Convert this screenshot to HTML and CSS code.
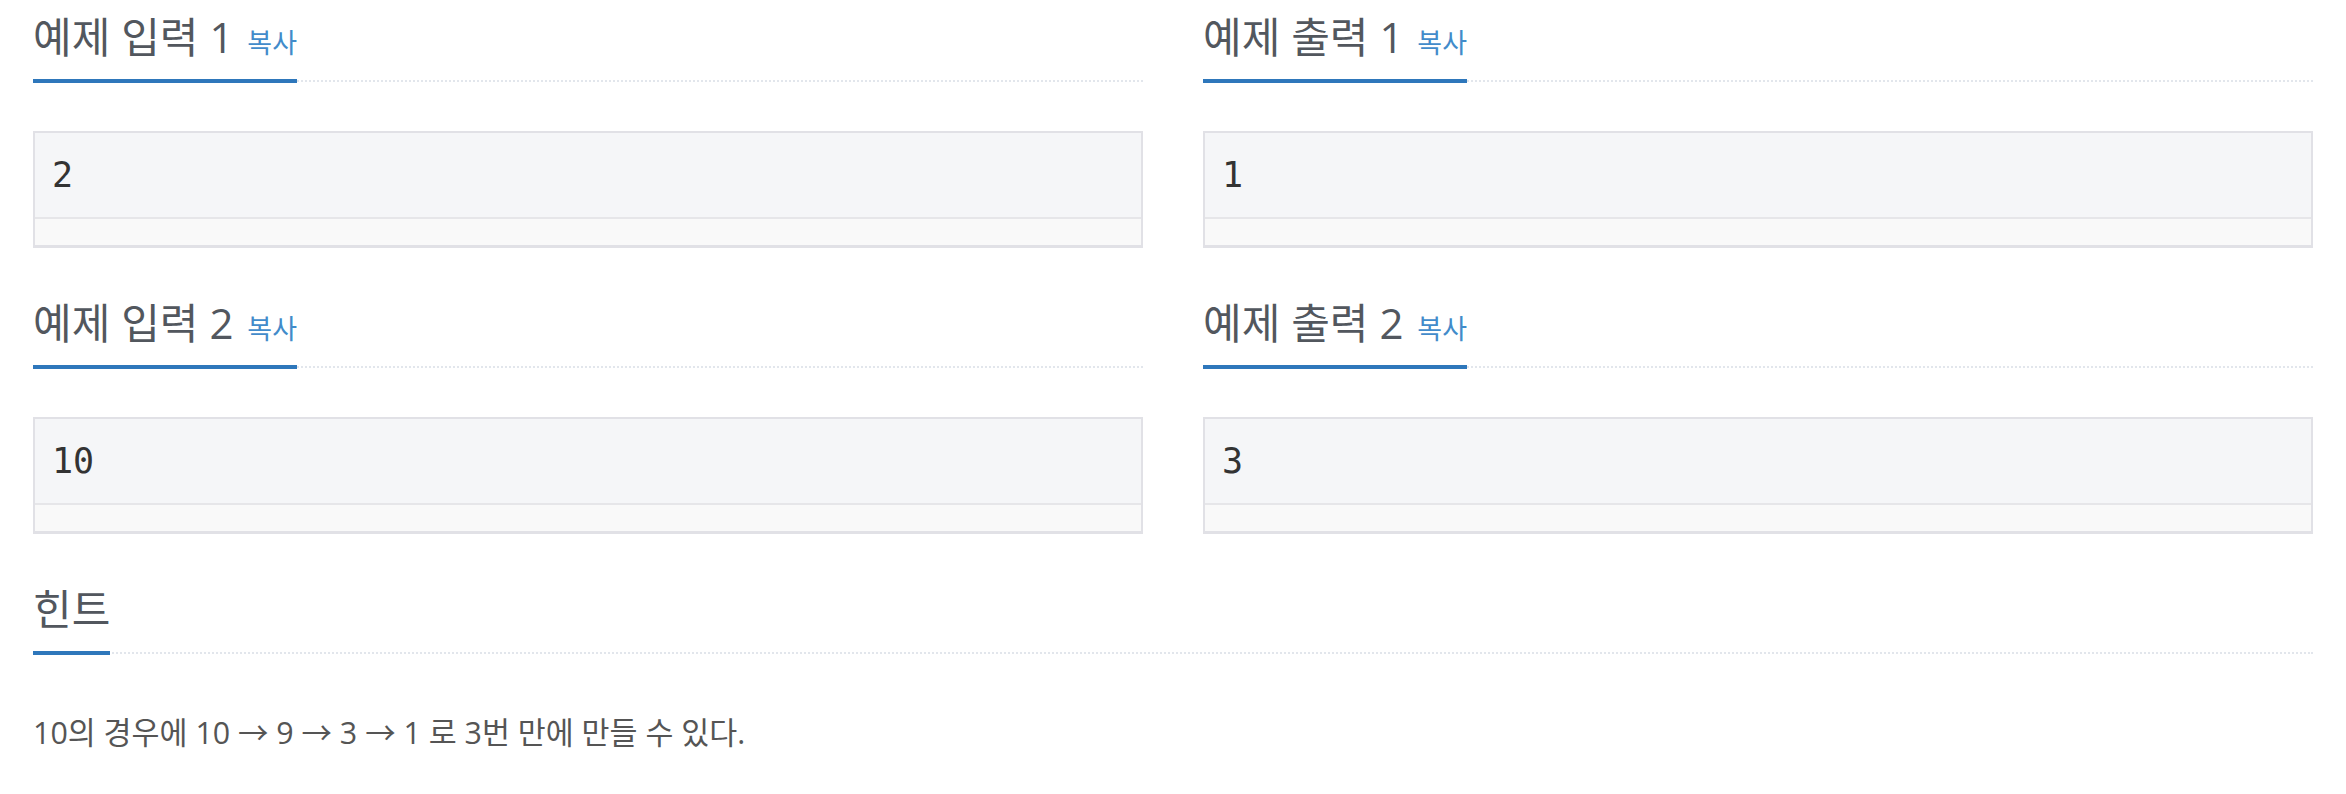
FILE: index.html
```html
<!DOCTYPE html>
<html lang="ko">
<head>
<meta charset="utf-8">
<title>예제</title>
<link rel="stylesheet" href="styles.css">
</head>
<body>
<div class="page">
  <div class="row">
    <section class="sample">
      <div class="headline"><h2>예제 입력 1 <span class="copy">복사</span></h2></div>
      <div class="box"><pre class="data">2</pre><div class="scroll"></div></div>
    </section>
    <section class="sample">
      <div class="headline"><h2>예제 출력 1 <span class="copy">복사</span></h2></div>
      <div class="box"><pre class="data">1</pre><div class="scroll"></div></div>
    </section>
  </div>
  <div class="row">
    <section class="sample">
      <div class="headline"><h2>예제 입력 2 <span class="copy">복사</span></h2></div>
      <div class="box"><pre class="data">10</pre><div class="scroll"></div></div>
    </section>
    <section class="sample">
      <div class="headline"><h2>예제 출력 2 <span class="copy">복사</span></h2></div>
      <div class="box"><pre class="data">3</pre><div class="scroll"></div></div>
    </section>
  </div>
  <section class="hint">
    <div class="headline"><h2>힌트</h2></div>
    <p class="hint-text">10의 경우에 10 → 9 → 3 → 1 로 3번 만에 만들 수 있다.</p>
  </section>
</div>
</body>
</html>
```
FILE: styles.css
```css
html, body {
  margin: 0;
  padding: 0;
  background: #ffffff;
}

.page {
  padding: 14px 33px 0 33px;
  font-family: "Open Sans", "Noto Sans CJK KR", sans-serif;
  display: flex;
  flex-direction: column;
  gap: 52px;
}

.row {
  display: grid;
  grid-template-columns: 1fr 1fr;
  column-gap: 60px;
}

.headline {
  border-bottom: 2px dotted #e2e6ec;
}

.headline h2 {
  display: inline-block;
  margin: 0 0 -3px 0;
  padding-bottom: 19px;
  border-bottom: 4px solid #2e77bb;
  font-size: 42px;
  line-height: 46px;
  font-weight: 400;
  color: #52575e;
}

.copy {
  font-size: 27px;
  font-weight: 400;
  line-height: 1;
  color: #428bca;
  margin-left: 3px;
}

.box {
  margin-top: 49px;
  border: 2px solid #e1e1e6;
  border-bottom-width: 3px;
  background: #f5f6f8;
}

.data {
  margin: 0;
  padding: 0 17px;
  font-family: "DejaVu Sans Mono", monospace;
  font-size: 35px;
  line-height: 84px;
  color: #333333;
}

.scroll {
  height: 26px;
  border-top: 2px solid #e6e6e9;
  background: #f9f9f9;
}

.hint-text {
  margin: 56px 0 0 0;
  font-size: 30.4px;
  line-height: 45px;
  color: #555555;
}
```
